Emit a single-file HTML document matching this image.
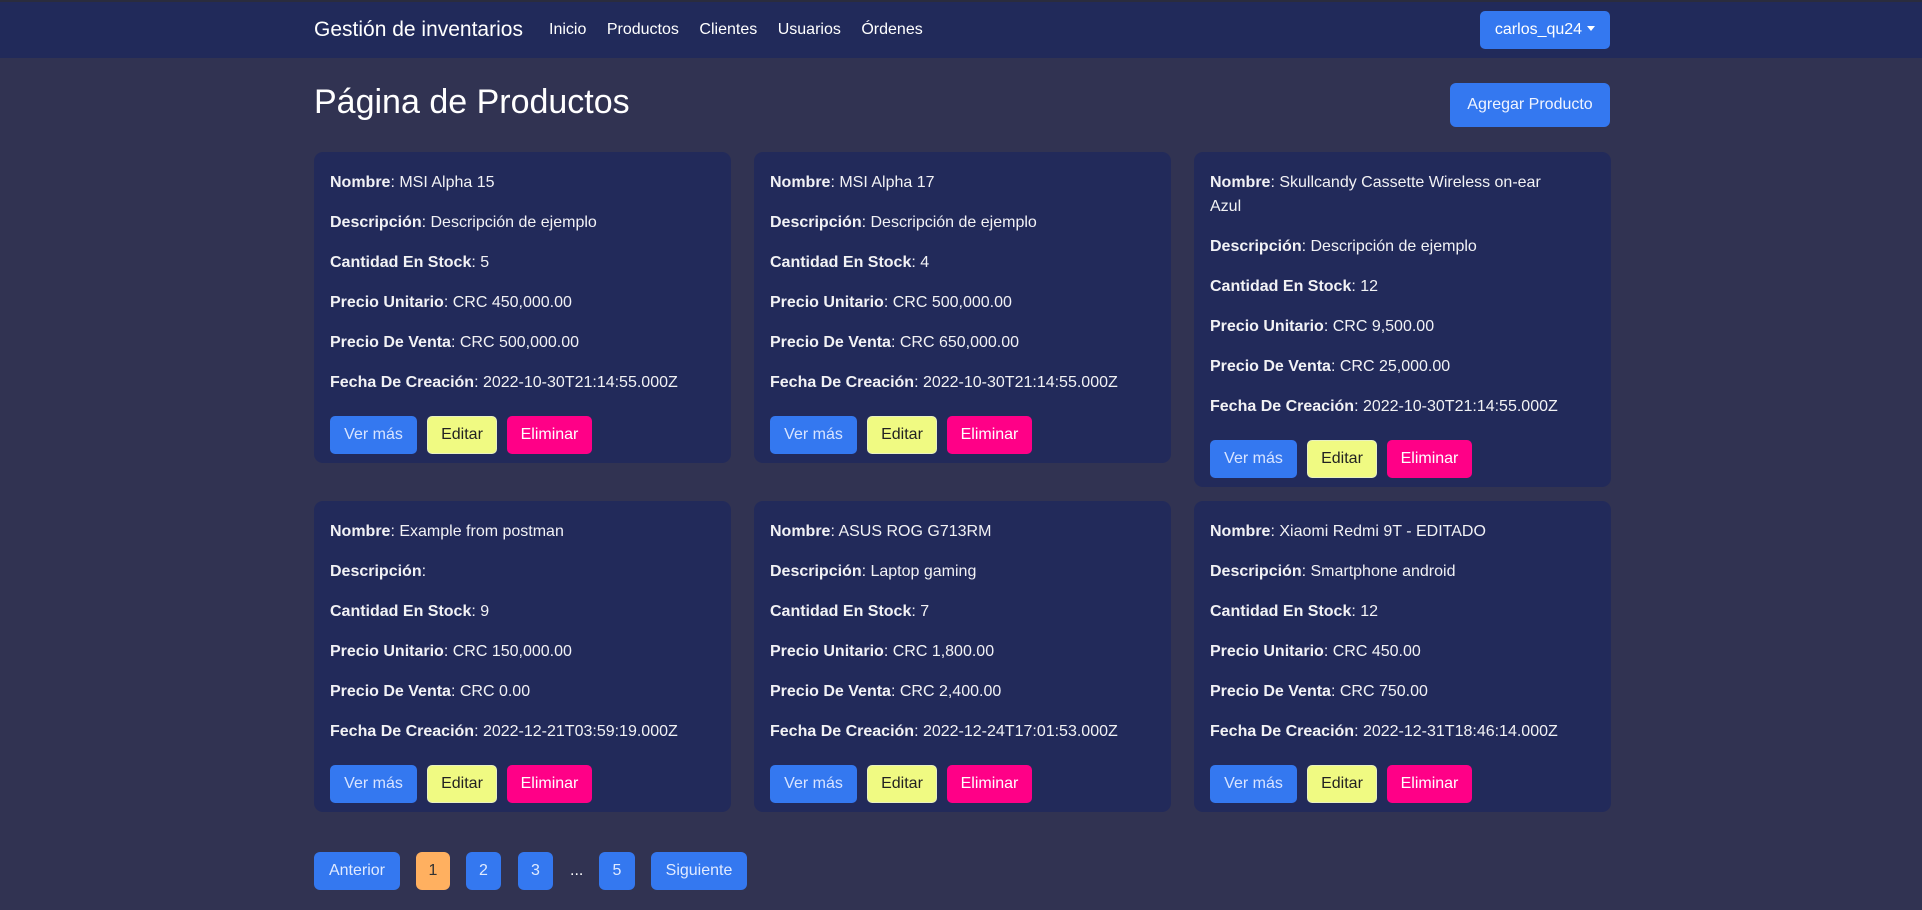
<!DOCTYPE html>
<html><head><meta charset="utf-8"><style>
*{box-sizing:border-box;margin:0;padding:0}
body{width:1922px;height:910px;overflow:hidden;background:#313352;font-family:"Liberation Sans",sans-serif;color:#f2f2f5;font-size:16px}
.nav{position:absolute;top:2px;left:0;width:1922px;height:56px;background:#212a5a}
.topstrip{position:absolute;top:0;left:0;width:1922px;height:2px;background:#2a2c3e}
.brand{position:absolute;left:314px;top:18px;font-size:21px;color:#fff}
.links{position:absolute;left:549px;top:21px;font-size:16px;color:#fff}
.links span{margin-right:20.5px}
.user{position:absolute;left:1480px;top:11px;width:130px;height:38px;background:#3478f0;border-radius:5px;color:#fff;font-size:16px;line-height:38px;text-align:center}
.user:after{content:"";display:inline-block;margin-left:5px;vertical-align:3px;border-top:5px solid #fff;border-left:4px solid transparent;border-right:4px solid transparent}
h1{position:absolute;left:314px;top:83px;font-size:34px;font-weight:400;color:#fff}
.add{position:absolute;left:1450px;top:83px;width:160px;height:44px;background:#3478f0;border-radius:6px;color:#f0f4ff;line-height:44px;text-align:center;font-size:16px}
.card{position:absolute;width:417px;background:#222a5a;border-radius:9px;padding:19px 16px 9px 16px}
.card p{line-height:24px;margin-bottom:16px;font-size:16px}
.card b{font-weight:700}
.btns{margin-top:21px;height:38px}
.b{display:inline-block;height:38px;line-height:38px;border-radius:5px;text-align:center;font-size:16px;margin-right:10px;vertical-align:top}
.v{width:87px;background:#3478f0;color:#d8e4ff}
.e{width:70px;background:#f0fa82;color:#222;border:1px solid #e8f0c0;line-height:36px}
.x{width:85px;background:#ff0087;color:#fff}
.pg{position:absolute;top:852px;height:38px;line-height:38px;border-radius:6px;background:#3478f0;color:#e0eaff;text-align:center;font-size:16px}
</style></head><body>
<div class="topstrip"></div>
<div class="nav"></div>
<div class="brand">Gestión de inventarios</div>
<div class="links"><span>Inicio</span><span>Productos</span><span>Clientes</span><span>Usuarios</span><span>Órdenes</span></div>
<div class="user">carlos_qu24</div>
<h1>Página de Productos</h1>
<div class="add">Agregar Producto</div>

<div class="card" style="left:314px;top:152px">
<p><b>Nombre</b>: MSI Alpha 15</p><p><b>Descripción</b>: Descripción de ejemplo</p><p><b>Cantidad En Stock</b>: 5</p><p><b>Precio Unitario</b>: CRC 450,000.00</p><p><b>Precio De Venta</b>: CRC 500,000.00</p><p><b>Fecha De Creación</b>: 2022-10-30T21:14:55.000Z</p>
<div class="btns"><span class="b v">Ver más</span><span class="b e">Editar</span><span class="b x">Eliminar</span></div></div>

<div class="card" style="left:754px;top:152px">
<p><b>Nombre</b>: MSI Alpha 17</p><p><b>Descripción</b>: Descripción de ejemplo</p><p><b>Cantidad En Stock</b>: 4</p><p><b>Precio Unitario</b>: CRC 500,000.00</p><p><b>Precio De Venta</b>: CRC 650,000.00</p><p><b>Fecha De Creación</b>: 2022-10-30T21:14:55.000Z</p>
<div class="btns"><span class="b v">Ver más</span><span class="b e">Editar</span><span class="b x">Eliminar</span></div></div>

<div class="card" style="left:1194px;top:152px">
<p><b>Nombre</b>: Skullcandy Cassette Wireless on-ear<br>Azul</p><p><b>Descripción</b>: Descripción de ejemplo</p><p><b>Cantidad En Stock</b>: 12</p><p><b>Precio Unitario</b>: CRC 9,500.00</p><p><b>Precio De Venta</b>: CRC 25,000.00</p><p><b>Fecha De Creación</b>: 2022-10-30T21:14:55.000Z</p>
<div class="btns"><span class="b v">Ver más</span><span class="b e">Editar</span><span class="b x">Eliminar</span></div></div>

<div class="card" style="left:314px;top:501px">
<p><b>Nombre</b>: Example from postman</p><p><b>Descripción</b>:</p><p><b>Cantidad En Stock</b>: 9</p><p><b>Precio Unitario</b>: CRC 150,000.00</p><p><b>Precio De Venta</b>: CRC 0.00</p><p><b>Fecha De Creación</b>: 2022-12-21T03:59:19.000Z</p>
<div class="btns"><span class="b v">Ver más</span><span class="b e">Editar</span><span class="b x">Eliminar</span></div></div>

<div class="card" style="left:754px;top:501px">
<p><b>Nombre</b>: ASUS ROG G713RM</p><p><b>Descripción</b>: Laptop gaming</p><p><b>Cantidad En Stock</b>: 7</p><p><b>Precio Unitario</b>: CRC 1,800.00</p><p><b>Precio De Venta</b>: CRC 2,400.00</p><p><b>Fecha De Creación</b>: 2022-12-24T17:01:53.000Z</p>
<div class="btns"><span class="b v">Ver más</span><span class="b e">Editar</span><span class="b x">Eliminar</span></div></div>

<div class="card" style="left:1194px;top:501px">
<p><b>Nombre</b>: Xiaomi Redmi 9T - EDITADO</p><p><b>Descripción</b>: Smartphone android</p><p><b>Cantidad En Stock</b>: 12</p><p><b>Precio Unitario</b>: CRC 450.00</p><p><b>Precio De Venta</b>: CRC 750.00</p><p><b>Fecha De Creación</b>: 2022-12-31T18:46:14.000Z</p>
<div class="btns"><span class="b v">Ver más</span><span class="b e">Editar</span><span class="b x">Eliminar</span></div></div>

<div class="pg" style="left:314px;width:86px">Anterior</div>
<div class="pg" style="left:416px;width:34px;background:#ffb060;color:#333">1</div>
<div class="pg" style="left:466px;width:35px">2</div>
<div class="pg" style="left:518px;width:35px">3</div>
<div style="position:absolute;left:570px;top:852px;line-height:38px;color:#fff">...</div>
<div class="pg" style="left:599px;width:36px">5</div>
<div class="pg" style="left:651px;width:96px">Siguiente</div>
</body></html>
